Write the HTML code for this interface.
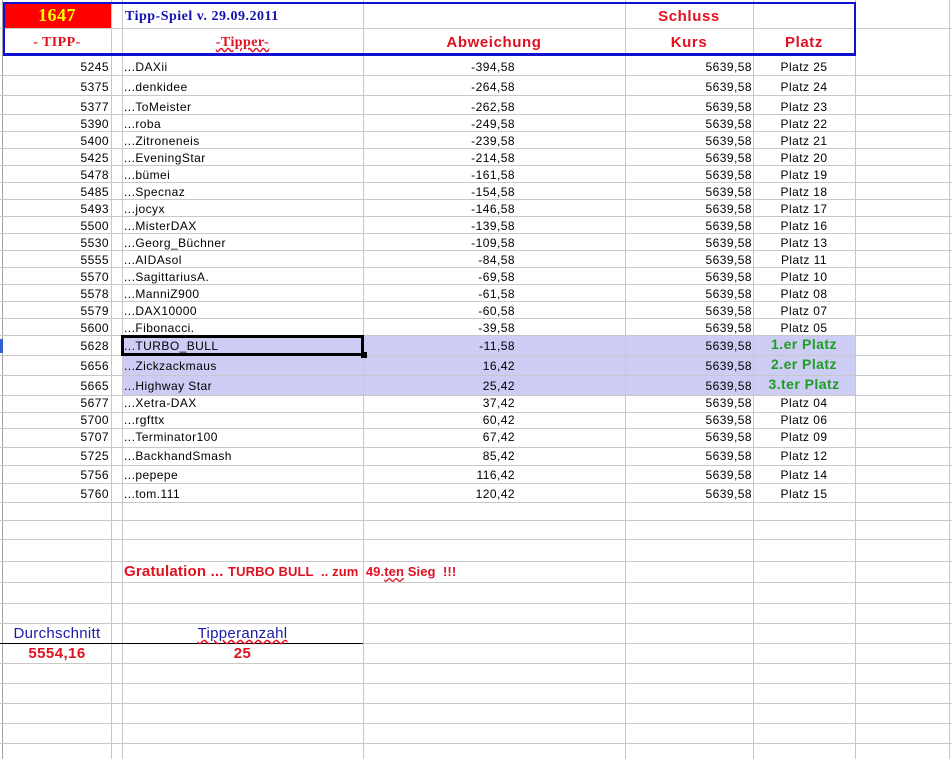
<!DOCTYPE html>
<html><head><meta charset="utf-8"><style>
body{margin:0;width:952px;height:759px;background:#fff;position:relative;overflow:hidden;font-family:"Liberation Sans",Arial,sans-serif;}
.h{position:absolute;left:0;width:952px;height:1px;background:#c8c8c8}
.v{position:absolute;top:0;height:759px;width:1px;background:#c8c8c8}
.t{position:absolute;font-size:12px;line-height:14px;white-space:nowrap;color:#000;letter-spacing:0.45px}
.r{text-align:right}
.c{text-align:center}
.hl{position:absolute;left:122px;width:733px;background:#ccccf5}
.red{color:#e01020}
.g{color:#1e9e1e;font-weight:bold;font-size:14px}
.hd{font:bold 15px/16px 'Liberation Sans',sans-serif;letter-spacing:0.6px}
</style></head><body>
<div class="hl" style="top:335px;height:60px"></div>
<div style="position:absolute;left:3px;top:3px;width:108px;height:25px;background:#ff0000"></div>
<div class="v" style="left:2px;background:#a0a0a0"></div>
<div class="v" style="left:111px"></div>
<div class="v" style="left:122px"></div>
<div class="v" style="left:363px"></div>
<div class="v" style="left:625px"></div>
<div class="v" style="left:753px"></div>
<div class="v" style="left:855px"></div>
<div class="v" style="left:949px"></div>
<div class="h" style="top:28px"></div>
<div class="h" style="top:75px"></div><div class="h" style="top:95px"></div><div class="h" style="top:114px"></div>
<div class="h" style="top:131px"></div><div class="h" style="top:148px"></div><div class="h" style="top:165px"></div>
<div class="h" style="top:182px"></div><div class="h" style="top:199px"></div><div class="h" style="top:216px"></div>
<div class="h" style="top:233px"></div><div class="h" style="top:250px"></div><div class="h" style="top:267px"></div>
<div class="h" style="top:284px"></div><div class="h" style="top:301px"></div><div class="h" style="top:318px"></div>
<div class="h" style="top:335px"></div><div class="h" style="top:355px"></div><div class="h" style="top:375px"></div>
<div class="h" style="top:395px"></div><div class="h" style="top:412px"></div><div class="h" style="top:428px"></div>
<div class="h" style="top:447px"></div><div class="h" style="top:465px"></div><div class="h" style="top:483px"></div>
<div class="h" style="top:502px"></div><div class="h" style="top:520px"></div><div class="h" style="top:539px"></div>
<div class="h" style="top:561px"></div><div class="h" style="top:582px"></div><div class="h" style="top:603px"></div>
<div class="h" style="top:623px"></div><div class="h" style="top:643px;width:363px;background:#000"></div><div class="h" style="top:643px;left:363px;width:589px"></div>
<div class="h" style="top:663px"></div><div class="h" style="top:683px"></div><div class="h" style="top:703px"></div>
<div class="h" style="top:723px"></div><div class="h" style="top:743px"></div>
<div style="position:absolute;left:3px;top:2px;width:849px;height:49px;border:2px solid #1010d0;border-bottom-width:3px"></div>
<div style="position:absolute;left:0;top:339px;width:3px;height:14px;background:#3060d0"></div>
<div class="t c" style="left:3px;width:108px;top:5px;font:bold 18px/20px 'Liberation Serif',serif;color:#ffff00">1647</div>
<div class="t" style="left:125px;top:9px;font:bold 14px/16px 'Liberation Serif',serif;color:#1010b0;letter-spacing:0.5px">Tipp-Spiel v. 29.09.2011</div>
<div class="t c red" style="left:3px;width:108px;top:35px;font:bold 14px/16px 'Liberation Serif',serif">- TIPP-</div>
<div class="t c red" style="left:122px;width:241px;top:35px;font:bold 14px/16px 'Liberation Serif',serif;text-decoration:underline wavy #e01020">-Tipper-</div>
<div class="t c red hd" style="left:363px;width:262px;top:35px">Abweichung</div>
<div class="t c red hd" style="left:625px;width:128px;top:9px">Schluss</div>
<div class="t c red hd" style="left:625px;width:128px;top:35px">Kurs</div>
<div class="t c red hd" style="left:753px;width:102px;top:35px">Platz</div>
<div class="t r" style="left:3px;width:106px;top:60px">5245</div><div class="t" style="left:124px;top:60px">...DAXii</div><div class="t r" style="left:363px;width:152px;top:60px">-394,58</div><div class="t r" style="left:625px;width:127px;top:60px">5639,58</div><div class="t c" style="left:753px;width:102px;top:60px">Platz 25</div>
<div class="t r" style="left:3px;width:106px;top:80px">5375</div><div class="t" style="left:124px;top:80px">...denkidee</div><div class="t r" style="left:363px;width:152px;top:80px">-264,58</div><div class="t r" style="left:625px;width:127px;top:80px">5639,58</div><div class="t c" style="left:753px;width:102px;top:80px">Platz 24</div>
<div class="t r" style="left:3px;width:106px;top:100px">5377</div><div class="t" style="left:124px;top:100px">...ToMeister</div><div class="t r" style="left:363px;width:152px;top:100px">-262,58</div><div class="t r" style="left:625px;width:127px;top:100px">5639,58</div><div class="t c" style="left:753px;width:102px;top:100px">Platz 23</div>
<div class="t r" style="left:3px;width:106px;top:117px">5390</div><div class="t" style="left:124px;top:117px">...roba</div><div class="t r" style="left:363px;width:152px;top:117px">-249,58</div><div class="t r" style="left:625px;width:127px;top:117px">5639,58</div><div class="t c" style="left:753px;width:102px;top:117px">Platz 22</div>
<div class="t r" style="left:3px;width:106px;top:134px">5400</div><div class="t" style="left:124px;top:134px">...Zitroneneis</div><div class="t r" style="left:363px;width:152px;top:134px">-239,58</div><div class="t r" style="left:625px;width:127px;top:134px">5639,58</div><div class="t c" style="left:753px;width:102px;top:134px">Platz 21</div>
<div class="t r" style="left:3px;width:106px;top:151px">5425</div><div class="t" style="left:124px;top:151px">...EveningStar</div><div class="t r" style="left:363px;width:152px;top:151px">-214,58</div><div class="t r" style="left:625px;width:127px;top:151px">5639,58</div><div class="t c" style="left:753px;width:102px;top:151px">Platz 20</div>
<div class="t r" style="left:3px;width:106px;top:168px">5478</div><div class="t" style="left:124px;top:168px">...bümei</div><div class="t r" style="left:363px;width:152px;top:168px">-161,58</div><div class="t r" style="left:625px;width:127px;top:168px">5639,58</div><div class="t c" style="left:753px;width:102px;top:168px">Platz 19</div>
<div class="t r" style="left:3px;width:106px;top:185px">5485</div><div class="t" style="left:124px;top:185px">...Specnaz</div><div class="t r" style="left:363px;width:152px;top:185px">-154,58</div><div class="t r" style="left:625px;width:127px;top:185px">5639,58</div><div class="t c" style="left:753px;width:102px;top:185px">Platz 18</div>
<div class="t r" style="left:3px;width:106px;top:202px">5493</div><div class="t" style="left:124px;top:202px">...jocyx</div><div class="t r" style="left:363px;width:152px;top:202px">-146,58</div><div class="t r" style="left:625px;width:127px;top:202px">5639,58</div><div class="t c" style="left:753px;width:102px;top:202px">Platz 17</div>
<div class="t r" style="left:3px;width:106px;top:219px">5500</div><div class="t" style="left:124px;top:219px">...MisterDAX</div><div class="t r" style="left:363px;width:152px;top:219px">-139,58</div><div class="t r" style="left:625px;width:127px;top:219px">5639,58</div><div class="t c" style="left:753px;width:102px;top:219px">Platz 16</div>
<div class="t r" style="left:3px;width:106px;top:236px">5530</div><div class="t" style="left:124px;top:236px">...Georg_Büchner</div><div class="t r" style="left:363px;width:152px;top:236px">-109,58</div><div class="t r" style="left:625px;width:127px;top:236px">5639,58</div><div class="t c" style="left:753px;width:102px;top:236px">Platz 13</div>
<div class="t r" style="left:3px;width:106px;top:253px">5555</div><div class="t" style="left:124px;top:253px">...AIDAsol</div><div class="t r" style="left:363px;width:152px;top:253px">-84,58</div><div class="t r" style="left:625px;width:127px;top:253px">5639,58</div><div class="t c" style="left:753px;width:102px;top:253px">Platz 11</div>
<div class="t r" style="left:3px;width:106px;top:270px">5570</div><div class="t" style="left:124px;top:270px">...SagittariusA.</div><div class="t r" style="left:363px;width:152px;top:270px">-69,58</div><div class="t r" style="left:625px;width:127px;top:270px">5639,58</div><div class="t c" style="left:753px;width:102px;top:270px">Platz 10</div>
<div class="t r" style="left:3px;width:106px;top:287px">5578</div><div class="t" style="left:124px;top:287px">...ManniZ900</div><div class="t r" style="left:363px;width:152px;top:287px">-61,58</div><div class="t r" style="left:625px;width:127px;top:287px">5639,58</div><div class="t c" style="left:753px;width:102px;top:287px">Platz 08</div>
<div class="t r" style="left:3px;width:106px;top:304px">5579</div><div class="t" style="left:124px;top:304px">...DAX10000</div><div class="t r" style="left:363px;width:152px;top:304px">-60,58</div><div class="t r" style="left:625px;width:127px;top:304px">5639,58</div><div class="t c" style="left:753px;width:102px;top:304px">Platz 07</div>
<div class="t r" style="left:3px;width:106px;top:321px">5600</div><div class="t" style="left:124px;top:321px">...Fibonacci.</div><div class="t r" style="left:363px;width:152px;top:321px">-39,58</div><div class="t r" style="left:625px;width:127px;top:321px">5639,58</div><div class="t c" style="left:753px;width:102px;top:321px">Platz 05</div>
<div class="t r" style="left:3px;width:106px;top:339px">5628</div><div class="t" style="left:124px;top:339px">...TURBO_BULL</div><div class="t r" style="left:363px;width:152px;top:339px">-11,58</div><div class="t r" style="left:625px;width:127px;top:339px">5639,58</div><div class="t c g" style="left:753px;width:102px;top:336px;line-height:16px">1.er Platz</div>
<div class="t r" style="left:3px;width:106px;top:359px">5656</div><div class="t" style="left:124px;top:359px">...Zickzackmaus</div><div class="t r" style="left:363px;width:152px;top:359px">16,42</div><div class="t r" style="left:625px;width:127px;top:359px">5639,58</div><div class="t c g" style="left:753px;width:102px;top:356px;line-height:16px">2.er Platz</div>
<div class="t r" style="left:3px;width:106px;top:379px">5665</div><div class="t" style="left:124px;top:379px">...Highway Star</div><div class="t r" style="left:363px;width:152px;top:379px">25,42</div><div class="t r" style="left:625px;width:127px;top:379px">5639,58</div><div class="t c g" style="left:753px;width:102px;top:376px;line-height:16px">3.ter Platz</div>
<div class="t r" style="left:3px;width:106px;top:396px">5677</div><div class="t" style="left:124px;top:396px">...Xetra-DAX</div><div class="t r" style="left:363px;width:152px;top:396px">37,42</div><div class="t r" style="left:625px;width:127px;top:396px">5639,58</div><div class="t c" style="left:753px;width:102px;top:396px">Platz 04</div>
<div class="t r" style="left:3px;width:106px;top:413px">5700</div><div class="t" style="left:124px;top:413px">...rgfttx</div><div class="t r" style="left:363px;width:152px;top:413px">60,42</div><div class="t r" style="left:625px;width:127px;top:413px">5639,58</div><div class="t c" style="left:753px;width:102px;top:413px">Platz 06</div>
<div class="t r" style="left:3px;width:106px;top:430px">5707</div><div class="t" style="left:124px;top:430px">...Terminator100</div><div class="t r" style="left:363px;width:152px;top:430px">67,42</div><div class="t r" style="left:625px;width:127px;top:430px">5639,58</div><div class="t c" style="left:753px;width:102px;top:430px">Platz 09</div>
<div class="t r" style="left:3px;width:106px;top:449px">5725</div><div class="t" style="left:124px;top:449px">...BackhandSmash</div><div class="t r" style="left:363px;width:152px;top:449px">85,42</div><div class="t r" style="left:625px;width:127px;top:449px">5639,58</div><div class="t c" style="left:753px;width:102px;top:449px">Platz 12</div>
<div class="t r" style="left:3px;width:106px;top:468px">5756</div><div class="t" style="left:124px;top:468px">...pepepe</div><div class="t r" style="left:363px;width:152px;top:468px">116,42</div><div class="t r" style="left:625px;width:127px;top:468px">5639,58</div><div class="t c" style="left:753px;width:102px;top:468px">Platz 14</div>
<div class="t r" style="left:3px;width:106px;top:487px">5760</div><div class="t" style="left:124px;top:487px">...tom.111</div><div class="t r" style="left:363px;width:152px;top:487px">120,42</div><div class="t r" style="left:625px;width:127px;top:487px">5639,58</div><div class="t c" style="left:753px;width:102px;top:487px">Platz 15</div>
<div style="position:absolute;left:121px;top:335px;width:237px;height:15px;border:3px solid #000"></div>
<div style="position:absolute;left:361px;top:352px;width:6px;height:6px;background:#000"></div>
<div class="t red" style="left:124px;top:564px;font:bold 15px/16px 'Liberation Sans',sans-serif;letter-spacing:0.2px">Gratulation ... <span style="font-size:13px;letter-spacing:0.1px">TURBO BULL&nbsp; .. zum&nbsp; 49.<u style="text-decoration:underline wavy #e01020">ten</u> Sieg&nbsp; !!!</span></div>
<div class="t c" style="left:3px;width:108px;top:626px;font-size:15px;line-height:16px;color:#1a1aa8;letter-spacing:0.3px">Durchschnitt</div>
<div class="t c" style="left:122px;width:241px;top:626px;font-size:15px;line-height:16px;color:#1a1aa8;letter-spacing:0.3px;text-decoration:underline wavy #e01020">Tipperanzahl</div>
<div class="t c red" style="left:3px;width:108px;top:646px;font:bold 15px/16px 'Liberation Sans',sans-serif">5554,16</div>
<div class="t c red" style="left:122px;width:241px;top:646px;font:bold 15px/16px 'Liberation Sans',sans-serif">25</div>
</body></html>
